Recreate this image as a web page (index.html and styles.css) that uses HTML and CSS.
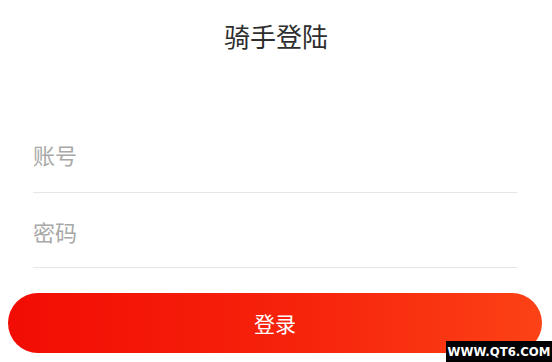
FILE: index.html
```html
<!DOCTYPE html>
<html lang="zh">
<head>
<meta charset="utf-8">
<title>骑手登陆</title>
<link rel="stylesheet" href="styles.css">
</head>
<body>
<div class="page">
  <h1 class="title">骑手登陆</h1>
  <div class="form">
    <div class="field"><span class="placeholder">账号</span></div>
    <div class="field"><span class="placeholder">密码</span></div>
  </div>
  <div class="btn">登录</div>
</div>
<div class="watermark">WWW.QT6.COM</div>
</body>
</html>
```
FILE: styles.css
```css
html, body {
  margin: 0;
  padding: 0;
  background: #ffffff;
}
body {
  width: 552px;
  height: 362px;
  overflow: hidden;
  position: relative;
  font-family: "Noto Sans CJK SC", "Noto Sans", sans-serif;
}
.page {
  display: flex;
  flex-direction: column;
}
.title {
  margin: 23px 0 0 0;
  height: 26px;
  line-height: 26px;
  font-size: 26px;
  font-weight: 400;
  color: #2e2e2e;
  text-align: center;
}
.form {
  margin: 69px 35px 0 33px;
  display: flex;
  flex-direction: column;
}
.field {
  height: 75px;
  box-sizing: border-box;
  padding-top: 25px;
  border-bottom: 1px solid #e6e6e6;
  display: flex;
  align-items: flex-start;
}
.field + .field {
  padding-top: 27px;
}
.placeholder {
  font-size: 22px;
  line-height: 22px;
  color: #a8a8a8;
}
.btn {
  margin: 25px 0 0 8px;
  width: 534px;
  height: 60px;
  border-radius: 30px;
  background: linear-gradient(90deg, #f20c04 0%, #f7260c 60%, #fc4216 100%);
  color: #ffffff;
  font-size: 21px;
  display: flex;
  align-items: center;
  justify-content: center;
}
.watermark {
  position: absolute;
  right: 0;
  bottom: 0;
  width: 106px;
  height: 21px;
  background: #000000;
  color: #ffffff;
  font-family: "DejaVu Sans Condensed", "DejaVu Sans", sans-serif;
  font-stretch: condensed;
  font-weight: bold;
  font-size: 13px;
  line-height: 21px;
  text-align: center;
}
```
